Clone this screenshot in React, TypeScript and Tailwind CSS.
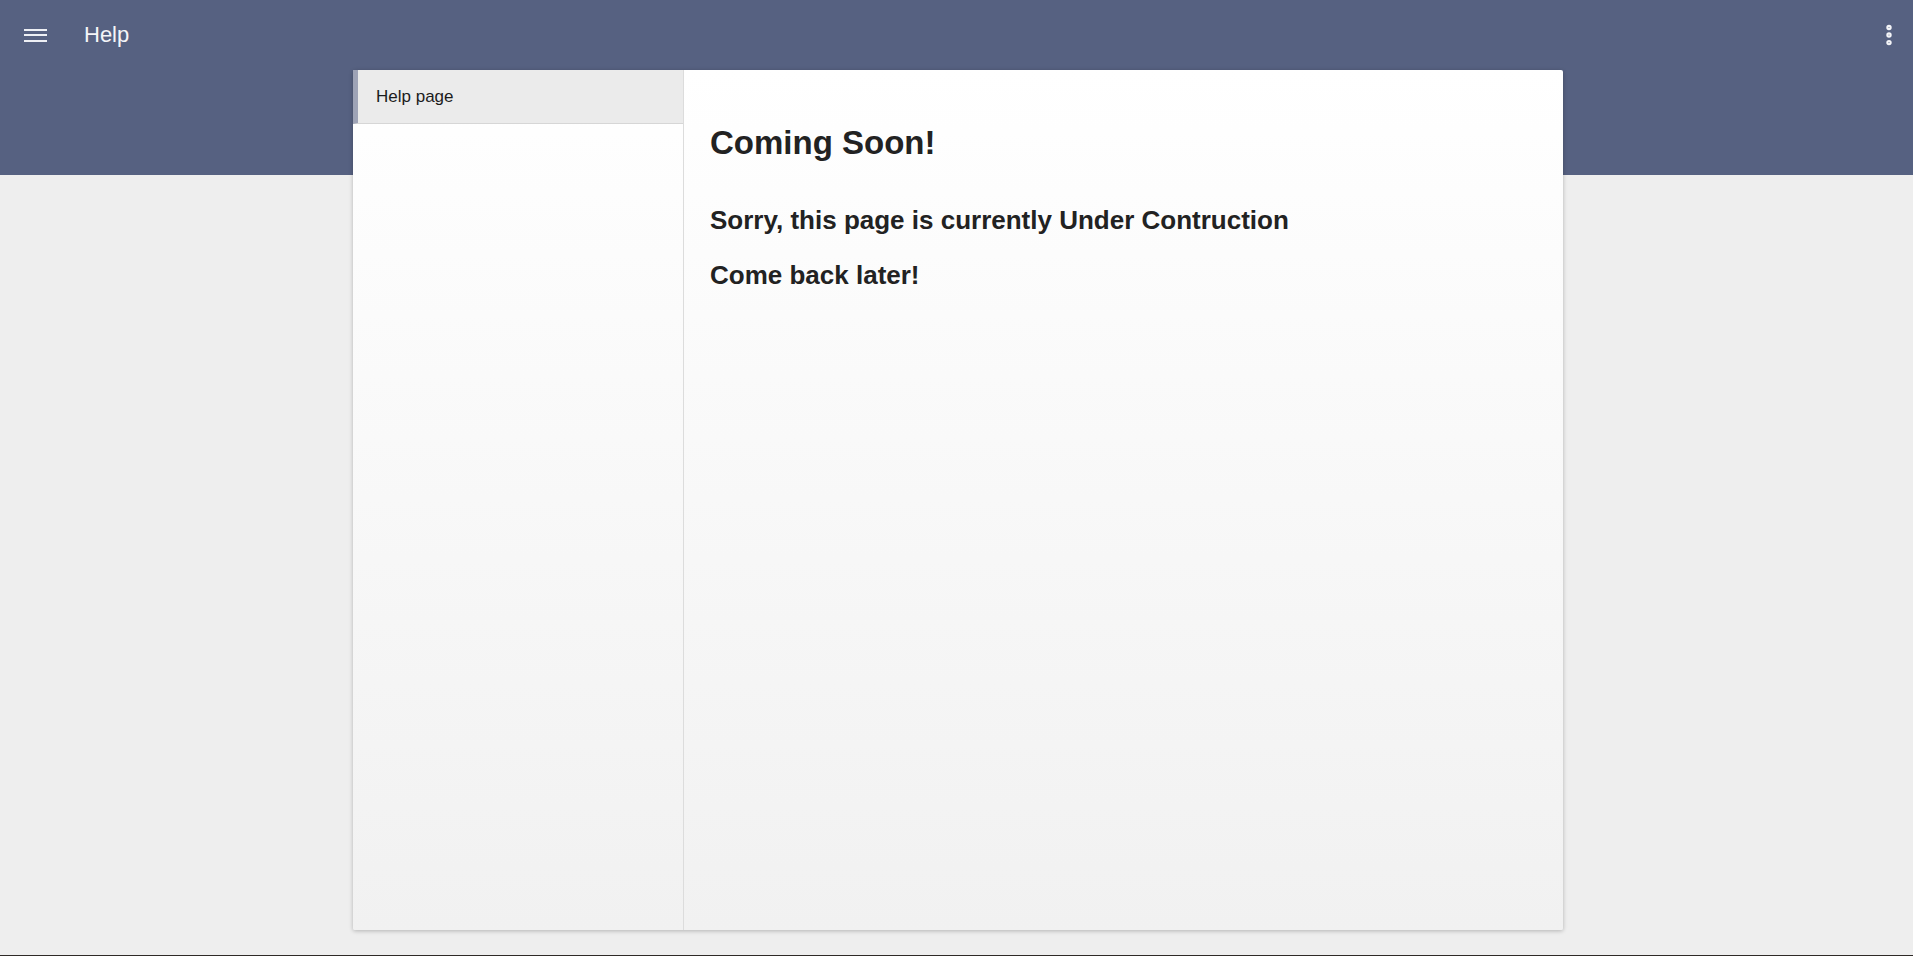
import { EllipsisVertical } from "lucide-react";

const font = { fontFamily: '"Liberation Sans", Arial, sans-serif' };

function TopBar() {
  return (
    <header className="h-[175px] bg-[#566181] text-[#f4f5f8]">
      <div className="flex h-[70px] items-center">
        <button className="ml-[24px] flex h-[24px] w-[23px] flex-col justify-center gap-[3.5px]">
          <span className="block h-[2px] w-full bg-[#eef0f5]" />
          <span className="block h-[2px] w-full bg-[#eef0f5]" />
          <span className="block h-[2px] w-full bg-[#eef0f5]" />
        </button>
        <h1 className="ml-[37px] text-[22px] leading-none">Help</h1>
        <div className="flex-1" />
        <EllipsisVertical className="mr-[11px] h-[26px] w-[26px]" strokeWidth={3} />
      </div>
    </header>
  );
}

function SideNav() {
  return (
    <nav className="flex w-[331px] flex-col border-r border-[#dcdcdc]">
      <a className="flex h-[54px] items-center border-b border-l-[5px] border-b-[#d6d6d6] border-l-[#9ea3b6] bg-[#ebebeb] pl-[18px] text-[17px] text-[#1c1c1c]">
        Help page
      </a>
    </nav>
  );
}

export default function App() {
  return (
    <div className="flex min-h-[956px] flex-col bg-[#eeeeee]" style={font}>
      <TopBar />
      <div className="flex-1">
        <main className="-mt-[105px] ml-[353px] flex h-[860px] w-[1210px] rounded-[2px] bg-gradient-to-b from-[#ffffff] to-[#f1f1f1] shadow-[0_1px_4px_rgba(0,0,0,0.25)]">
          <SideNav />
          <section className="flex-1 pl-[26px] pt-[53px] text-[#222222]">
            <h2 className="text-[33px] leading-[40px] font-bold">Coming Soon!</h2>
            <h3 className="mt-[41px] text-[26px] leading-[32px] font-bold">
              Sorry, this page is currently Under Contruction
            </h3>
            <h3 className="mt-[23px] text-[26px] leading-[32px] font-bold">Come back later!</h3>
          </section>
        </main>
      </div>
      <div className="h-[1px] bg-[#2e2a27]" />
    </div>
  );
}
